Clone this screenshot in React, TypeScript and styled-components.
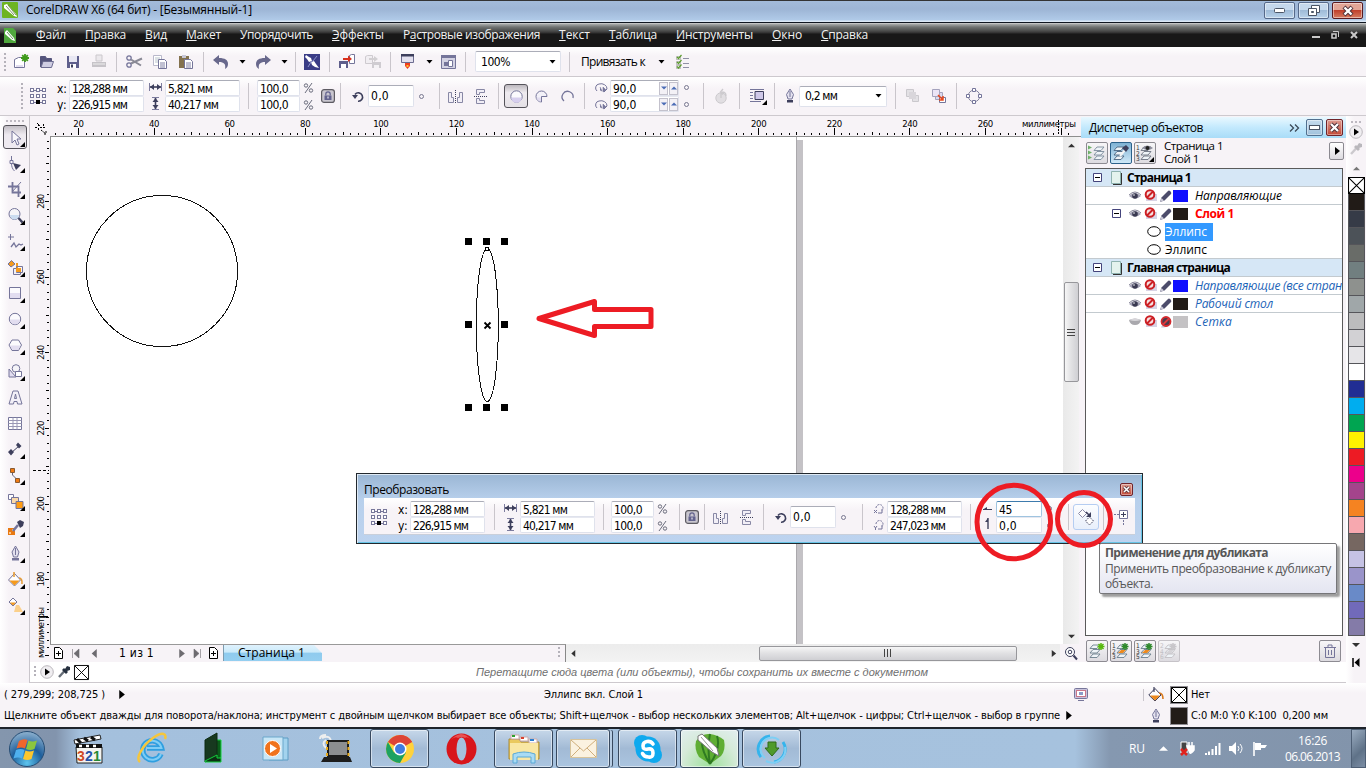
import React, { useLayoutEffect, useRef, useState } from "react";
import styled, { createGlobalStyle, css } from "styled-components";

const TAHOMA = `"DejaVu Sans Condensed", "DejaVu Sans", sans-serif`;
const SEGOE = `"Open Sans", "Noto Sans", sans-serif`;
const INK = "#75759a";
const DARK = "#3d3f5c";
const LITE = "#e2ddf0";
const ORANGE = "#f59a1c";

const Global = createGlobalStyle`
  * { box-sizing: border-box; }
  html, body { margin: 0; padding: 0; overflow: hidden; }
  body { font-family: ${TAHOMA}; font-size: 11px; color: #000; background: #f7f3f7; }
  svg { display: block; flex: none; overflow: visible; }
`;

/* ---------- text ---------- */

const Run = styled.span<{ $face?: string; $size?: number; $color?: string; $bold?: boolean; $italic?: boolean }>`
  display: inline-block;
  flex: none;
  white-space: pre;
  line-height: 14px;
  font-family: ${(p) => p.$face || TAHOMA};
  font-size: ${(p) => p.$size || 11}px;
  color: ${(p) => p.$color || "inherit"};
  font-weight: ${(p) => (p.$bold ? 700 : 400)};
  font-style: ${(p) => (p.$italic ? "italic" : "normal")};
`;

type LabelProps = {
  text: string;
  w: number;
  face?: string;
  size?: number;
  color?: string;
  bold?: boolean;
  italic?: boolean;
  mark?: number;
};

/* A label whose tracking is measured so that it fills the width it was designed for. */
function Label({ text, w, face, size, color, bold, italic, mark }: LabelProps) {
  const ref = useRef<HTMLSpanElement>(null);
  const [track, setTrack] = useState(0);
  useLayoutEffect(() => {
    if (ref.current) {
      const natural = ref.current.getBoundingClientRect().width - track * text.length;
      setTrack((w + 1 - natural) / text.length);
    }
  }, [text, w]);
  return (
    <Run ref={ref} style={{ letterSpacing: track }} $face={face} $size={size} $color={color} $bold={bold} $italic={italic}>
      {mark === undefined ? text : (
        <>{text.slice(0, mark)}<u>{text[mark]}</u>{text.slice(mark + 1)}</>
      )}
    </Run>
  );
}

/* ---------- generic parts ---------- */

const Cell = styled.div<{ $w?: number; $h?: number; $ml?: number }>`
  flex: none;
  width: ${(p) => p.$w ?? 26}px;
  height: ${(p) => p.$h ?? 26}px;
  margin-left: ${(p) => p.$ml ?? 0}px;
  display: flex;
  align-items: center;
  justify-content: center;
`;
const Gap = styled.div<{ $w: number }>`
  flex: none;
  width: ${(p) => p.$w}px;
`;
const Sep = styled.div<{ $w?: number; $h?: number }>`
  flex: none;
  width: ${(p) => p.$w ?? 9}px;
  height: ${(p) => p.$h ?? 20}px;
  background: linear-gradient(#c9c5cb, #c9c5cb) center / 1px 100% no-repeat;
`;
const Grip = styled.div<{ $h: number }>`
  flex: none;
  width: 2px;
  height: ${(p) => p.$h}px;
  background: repeating-linear-gradient(#b5b2ba 0 2px, transparent 2px 4px);
`;
const Caret = ({ c = "#000" }: { c?: string }) => (
  <svg width="7" height="4"><path d="M0.5 0h6L3.5 3.6z" fill={c} /></svg>
);
const Tri = ({ dir, c = "#000", s = 8 }: { dir: "l" | "r" | "u" | "d"; c?: string; s?: number }) => {
  const d = { l: "M6 0v8L1.5 4z", r: "M2 0v8l5-4z", u: "M0 6h8L4 2z", d: "M0 2h8L4 6z" }[dir];
  return <svg width={s} height={s} viewBox="0 0 8 8"><path d={d} fill={c} /></svg>;
};

/* ---------- window frame ---------- */

const Screen = styled.div`
  position: relative;
  width: 1366px;
  height: 768px;
  display: flex;
  flex-direction: column;
  overflow: hidden;
  background: #f7f3f7;
`;
const TitleBar = styled.div`
  flex: none;
  height: 23px;
  border-top: 1px solid #333;
  border-bottom: 1px solid #0f1620;
  background: linear-gradient(#a3bbda 0, #9db5d5 8px, #b0cae8 19px, #dbe8f5 20px);
  display: flex;
  align-items: flex-start;
  padding-left: 2px;
`;
const TitleText = styled.div`
  margin: 2px 0 0 8px;
  flex: 1;
`;
const WinButton = styled.div<{ $close?: boolean }>`
  width: 31px;
  height: 17px;
  margin: 1px 3px 0 0;
  border: 1px solid ${(p) => (p.$close ? "#5a1a20" : "#56698a")};
  border-radius: 2px;
  box-shadow: inset 0 0 0 1px rgba(255, 255, 255, 0.45);
  background: ${(p) =>
    p.$close ? "linear-gradient(#e2a596 45%, #c0402c 50%, #d67b60)" : "linear-gradient(#c5d8ec 45%, #9fbbd8 50%, #b9d2ea)"};
  display: flex;
  align-items: center;
  justify-content: center;
`;
const MenuBar = styled.div`
  flex: none;
  height: 24px;
  background: linear-gradient(#dcdcdc 0, #a9acab 1px, #707372 4px, #4a4b4a 8px, #303030 10px, #181818 11px);
  color: #f2f2f2;
  display: flex;
  align-items: center;
  padding-left: 2px;
`;
const MenuItems = styled.div`
  display: flex;
  flex: 1;
  gap: 19px;
  margin-left: 20px;
`;
const MdiButtons = styled.div`
  display: flex;
  gap: 11px;
  margin-right: 8px;
  align-items: center;
`;

/* ---------- toolbars ---------- */

const StandardBar = styled.div`
  flex: none;
  height: 30px;
  border-bottom: 1px solid #cdc9ce;
  background: linear-gradient(#fff 0, #f7f3f7 9px);
  display: flex;
  align-items: center;
  padding-left: 4px;
`;
const PropertyBar = styled.div`
  flex: none;
  height: 39px;
  border-bottom: 1px solid #cdc9ce;
  background: linear-gradient(#fff 0, #f7f3f7 12px);
  display: flex;
  align-items: center;
  padding-left: 21px;
`;
const Field = styled.div<{ $w: number; $h?: number; $active?: boolean }>`
  flex: none;
  width: ${(p) => p.$w}px;
  height: ${(p) => p.$h ?? 16}px;
  border: 1px solid #dfe2ec;
  border-top-color: #abadb8;
  border-radius: 2px;
  ${(p) => p.$active && css`border-color: #9fc4e0; border-top-color: #3d7bad;`}
  background: #fff;
  padding-left: 2px;
  display: flex;
  align-items: center;
`;
const Pair = styled.div<{ $w?: number; $gap?: number; $drop?: number }>`
  flex: none;
  width: ${(p) => (p.$w ? p.$w + "px" : "auto")};
  padding-top: ${(p) => p.$drop ?? 0}px;
  display: flex;
  flex-direction: column;
  align-items: center;
  gap: ${(p) => p.$gap ?? 0}px;
`;
const FieldStack = styled(Pair)`
  & > ${Field} { padding-top: 2px; }
  & > ${Field} + ${Field} { border-top-color: #e6e8f0; }
`;
const Combo = styled.div<{ $w: number }>`
  flex: none;
  width: ${(p) => p.$w}px;
  height: 21px;
  border: 1px solid #dfe2ec;
  border-top-color: #abadb8;
  border-radius: 2px;
  background: #fff;
  display: flex;
  align-items: center;
  justify-content: space-between;
  padding: 0 4px 0 5px;
`;
const Pressed = styled.div`
  flex: none;
  width: 24px;
  height: 24px;
  border: 1px solid #55535a;
  border-radius: 3px;
  background: linear-gradient(#bcb8be, #efebf0 35%, #e5e1e6);
  display: flex;
  align-items: center;
  justify-content: center;
`;
const Spins = styled.div`
  display: flex;
  gap: 1px;
  margin-left: auto;
`;
const Spin = styled.div`
  width: 9px;
  height: 13px;
  margin-top: -2px;
  border: 1px solid #c3c1cc;
  background: #f3f1f6;
  display: flex;
  align-items: center;
  justify-content: center;
`;

/* ---------- icons ---------- */

const I = {
  app: (
    <svg width="16" height="16"><rect width="16" height="16" rx="1" fill="#6db422" /><path d="M2 3l3-1 9 10 1 3-3-1L2 6z" fill="#fff" /><path d="M4 4l8 9M6 3l8 10" stroke="#5d7d3c" strokeWidth=".8" /></svg>
  ),
  doc: (
    <svg width="12" height="15"><path d="M0 0h9l3 3v12H0z" fill="#4fa83d" /><path d="M1 4l2-2 7 8 1 3-3-1-7-6z" fill="#fff" /><path d="M3 4l6 7" stroke="#3c7c35" strokeWidth=".8" /></svg>
  ),
  neu: (
    <svg width="15" height="15"><path d="M.5 5.500l4-2h6v10H.5z" fill="#fff" stroke={INK} /><path d="M2 12h7" stroke={LITE} strokeWidth="2" /><path d="M11 0v8M7 4h8M8.2 1.2l5.6 5.6M13.800 1.200l-5.600 5.600" stroke="#3f9a1a" strokeWidth="1.800" /></svg>
  ),
  open: (
    <svg width="14" height="13"><path d="M.5 12V1.500h5l1 2h5V6" fill="#55557c" stroke="#55557c" /><path d="M1 12.500L3 6.500H13.500L11.500 12.500z" fill="#cfcde2" stroke="#6c6c90" /></svg>
  ),
  save: (
    <svg width="12" height="12"><path d="M0 0h12v12H0z" fill="#5f5f8c" /><path d="M2 0h8v6H2z" fill="#e9e8f3" /><path d="M3 8h6v4H3z" fill="#fff" /><path d="M4 8.500h2v3H4z" fill={DARK} /></svg>
  ),
  print: (
    <svg width="14" height="13"><path d="M4 0h6v6H4z" fill="#ebe8ec" stroke="#cbc8cc" /><path d="M0 7h14v5H0z" fill="#c6c3c8" /><path d="M1 9h12" stroke="#eee" /></svg>
  ),
  cut: (
    <svg width="17" height="13"><circle cx="3" cy="3" r="2.200" fill="none" stroke={INK} strokeWidth="1.300" /><circle cx="3" cy="10" r="2.200" fill="none" stroke={INK} strokeWidth="1.300" /><path d="M5 4.500L15 10.500M5 8.500L16 3.500" stroke="#8a8a96" strokeWidth="2" /></svg>
  ),
  copy: (
    <svg width="14" height="14"><path d="M.5 .5h8v10h-8z" fill="#fff" stroke="#b9b9cb" /><path d="M2 3h5M2 5h3M2 7h3" stroke="#b9c4cb" /><path d="M5.500 4.500h6l2 2v7h-8z" fill="#fff" stroke={INK} /><path d="M7 8h5M7 10h5M7 12h5" stroke={INK} strokeWidth=".9" /></svg>
  ),
  paste: (
    <svg width="14" height="14"><path d="M0 1h10v12H0z" fill="#84724e" /><path d="M3 0h4v3H3z" fill="#c8c8d8" /><path d="M5.500 4.500h6l2 2v7h-8z" fill="#fff" stroke={INK} /><path d="M7 8h5M7 10h5M7 12h5" stroke={INK} strokeWidth=".9" /></svg>
  ),
  undo: (
    <svg width="16" height="14"><path d="M0 5L6 0v3c6 0 9 2 9 6 0 2-1 4-3 5 1-5-1-7-6-7v3z" fill="#68688c" /></svg>
  ),
  redo: (
    <svg width="16" height="14"><path d="M16 5L10 0v3C4 3 1 5 1 9c0 2 1 4 3 5-1-5 1-7 6-7v3z" fill="#68688c" /></svg>
  ),
  connect: (
    <svg width="16" height="16"><rect width="16" height="16" fill="#3a3c86" /><path d="M2 1l3 2 2 1 1 3-3 1-2-3-2-2zM7 8l3-1 2 3 3 4-4-1-3-2z" fill="#fff" /><path d="M4 13l3-5 2-1 4-5" stroke="#8d92cc" strokeWidth="1" fill="none" /></svg>
  ),
  imp: (
    <svg width="16" height="15"><path d="M0 7h9v7H0z" fill="#5f5f8c" /><path d="M2 10h5v4H2z" fill="#fff" /><path d="M10.500 1.500l2-1h3v9h-5z" fill="#fff" stroke={INK} /><path d="M4 6V4h5V1.500L13 5 9 8V6z" fill="#d8301c" /></svg>
  ),
  exp: (
    <svg width="16" height="15" opacity=".8"><path d="M.5 2.500l2-1h5v8h-7z" fill="#f0eef1" stroke="#c4c1c6" /><path d="M7 8h9v6H7z" fill="#c6c3c8" /><path d="M9 11h5v3H9z" fill="#f4f2f5" /><path d="M4 6V4h5V2l4 3-4 3V6z" fill="#c9c7ca" /></svg>
  ),
  launch: (
    <svg width="13" height="15"><path d="M.5 .500h12v8H.5z" fill="#e3e1ef" stroke="#6c6c90" /><path d="M0 0h13v2.500H0z" fill={DARK} /><path d="M4 9h5v3L6.500 15 4 12z" fill="#f03e1e" /><path d="M5.500 11h2v2h-2z" fill="#fbc02d" /></svg>
  ),
  welcome: (
    <svg width="15" height="14"><path d="M.5 .500h14v13H.5z" fill="#d3d2e3" stroke={INK} /><path d="M0 0h15v3H0z" fill={INK} /><path d="M3 7h4v4H3z" fill={INK} /><path d="M7.500 5.500h4v6h-4z" fill="#fff" stroke={INK} /></svg>
  ),
  checks: (
    <svg width="13" height="14"><path d="M.5 1.500h4v3h-4zM.5 6.500h4v3h-4zM.5 10.500h4v3h-4z" fill="none" stroke="#a5a5a5" strokeWidth=".7" /><path d="M1 2l1.500 1.500L5.500 0M1 7l1.500 1.500L5.500 5M1 11.500L2.500 13l3-3.500" stroke="#5c9c2e" strokeWidth="1.200" fill="none" /><path d="M7 3.500h6M7 8.500h6M7 12.500h6" stroke="#9090a5" /></svg>
  ),
  refpt: (
    <svg width="17" height="17">
      {[0, 6, 12].map((y) => [0, 6, 12].map((x) => <rect key={x + "-" + y} x={x + 0.500} y={y + 0.500} width="3" height="3" fill={x === 6 && y === 12 ? "#000" : "#fff"} stroke={x === 6 && y === 12 ? "#000" : "#77779a"} />))}
      <path d="M4 2.500h2M10 2.500h2M4 14.500h2M10 14.500h2" stroke="#77779a" />
    </svg>
  ),
  width: (
    <svg width="13" height="9"><path d="M.5 0v8M12.500 0v8" stroke="#7c7c9e" /><path d="M1 4h11" stroke={DARK} strokeWidth="1.600" /><path d="M5 1v6L1 4zM8 1v6l4-3z" fill={DARK} /></svg>
  ),
  height: (
    <svg width="9" height="13"><path d="M1 .500h7M1 12.500h7" stroke="#7c7c9e" /><path d="M4.500 1v11" stroke={DARK} strokeWidth="1.600" /><path d="M1.500 5h6l-3-4zM1.500 8h6l-3 4z" fill={DARK} /></svg>
  ),
  pct: (
    <svg width="9" height="10"><path d="M8 0L1 10" stroke="#6a6c7c" /><circle cx="2" cy="2.500" r="1.700" fill="none" stroke="#6a6c7c" /><circle cx="7" cy="7.500" r="1.700" fill="none" stroke="#6a6c7c" /></svg>
  ),
  lock: (
    <svg width="14" height="14"><rect x=".6" y=".6" width="12.800" height="12.800" rx="2.500" fill="#c9c6cf" stroke="#5d5b62" strokeWidth="1.200" /><path d="M3.500 6.500h7v4.500h-7z" fill="#63638e" /><path d="M4.800 6.500V5a2.200 2.200 0 014.400 0v1.500" fill="none" stroke="#63638e" strokeWidth="1.200" /><path d="M7 7.500v2" stroke="#fff" /></svg>
  ),
  rot: (
    <svg width="12" height="11"><path d="M3 3.500A4.200 4.200 0 116 10.200" fill="none" stroke={DARK} strokeWidth="1.600" /><path d="M0 4h6L3 8z" fill={DARK} /></svg>
  ),
  deg: <svg width="5" height="5"><circle cx="2.500" cy="2.500" r="2" fill="none" stroke="#77778f" /></svg>,
  mirH: (
    <svg width="15" height="13"><path d="M.5 2.500h3v5h2v5h-5zM14.500 2.500h-3v5h-2v5h5z" fill="#f1eef6" stroke="#8888a5" /><path d="M7.500 0v13" stroke={DARK} strokeDasharray="1 1" /></svg>
  ),
  mirV: (
    <svg width="14" height="15"><path d="M2.500 .500h8v3h-5v2h-3zM2.500 14.500h8v-3h-5v-2h-3z" fill="#f1eef6" stroke="#8888a5" /><path d="M0 7.500h14" stroke={DARK} strokeDasharray="1 1" /></svg>
  ),
  ell: (
    <svg width="13" height="13"><circle cx="6.500" cy="6.500" r="5.700" fill="#fbfafd" stroke={INK} /><path d="M1.200 7.500h10.600a5.300 5.300 0 01-10.600 0z" fill="#d7cfee" /></svg>
  ),
  pie: (
    <svg width="13" height="13"><path d="M6.500 6.500h5.500A5.500 5.500 0 106.500 12z" fill="#f3f1f8" stroke={INK} /><path d="M1.500 7.500H6v4a5 5 0 01-4.500-4z" fill={LITE} /></svg>
  ),
  arc: <svg width="13" height="13"><path d="M3 11A5.500 5.500 0 1112 8" fill="none" stroke={INK} strokeWidth="1.300" /></svg>,
  ang: (
    <svg width="13" height="10"><path d="M2 8A4 4 0 014 1a6 5 0 018 5l-3 3" fill="none" stroke={INK} /><path d="M5 4l2 4-2-1M8 4v5l3-2z" fill={INK} stroke={INK} strokeWidth=".6" /></svg>
  ),
  dirn: (
    <svg width="13" height="15" opacity=".8"><circle cx="6" cy="9" r="5.200" fill="#dcdadd" stroke="#c2c0c4" /><path d="M6 9V2.500M7 3q4 0 4 4M8 0L5.500 3 8 5.500" fill="none" stroke="#c2c0c4" strokeWidth="1.300" /></svg>
  ),
  wrap: (
    <svg width="17" height="17"><path d="M0 1.500h14M0 4.500h3M0 7.500h3M0 10.500h3M0 13.500h11" stroke={INK} /><path d="M5 3.500h8.500v8H5z" fill="#cfc8e8" stroke={DARK} /><path d="M17 12v5h-5z" fill="#000" /></svg>
  ),
  pen: (
    <svg width="10" height="14"><path d="M5 0L1.500 5.500 3 10h4l1.500-4.500z" fill="#e3e1ee" stroke={INK} /><path d="M5 2v6" stroke={INK} /><path d="M2 11h6v2.500H2z" fill={DARK} /></svg>
  ),
  front: (
    <svg width="14" height="14" opacity=".75"><path d="M.5 .500h7v7h-7zM6.500 6.500h6v6h-6z" fill="#dddbdf" stroke="#bcbabf" /><path d="M3 3h7v7H3z" fill="#cfcdd2" /></svg>
  ),
  back: (
    <svg width="14" height="14"><path d="M3.500 3.500h7v7h-7z" fill="#dcd8ec" stroke="#a4a2bd" /><path d="M.5 .500h7v7h-7z" fill="#ebe4f6" stroke="#a4a2bd" /><path d="M7.500 8.500h6v5h-6z" fill="#fff" stroke={INK} /><path d="M6 6l5 5m0-4v4H7" stroke="#e8481c" strokeWidth="1.500" fill="none" /></svg>
  ),
  curve: (
    <svg width="16" height="16"><circle cx="8" cy="8" r="5.800" fill="none" stroke="#85859f" /><path d="M6.500 .500h3v3h-3zM6.500 12.500h3v3h-3zM.5 6.500h3v3h-3zM12.500 6.500h3v3h-3z" fill="#fff" stroke={INK} /></svg>
  ),
};

const toolIcons: { d: React.ReactNode; fly?: boolean }[] = [
  { fly: true, d: <path d="M4 1v12l3-3 2 5 2-1-2-5h4z" fill="#f8f7fb" stroke={INK} /> },
  { fly: true, d: <><path d="M3.500 0v4M3.500 7c0 4 1 6 3 8M2 4.500h3v3H2z" fill="none" stroke={INK} /><path d="M5 7l8 2-5 5z" fill={DARK} /></> },
  { fly: true, d: <><path d="M4.500 0v10.500H13M0 4.500h10.500V15" fill="none" stroke={INK} strokeWidth="1.800" /><path d="M13 0L4 10" stroke={INK} /></> },
  { fly: true, d: <><circle cx="6.500" cy="6" r="5.500" fill="#f5f4f8" stroke={INK} /><path d="M2 7h9a4.500 4.500 0 01-9 0z" fill="#cbdcf0" /><path d="M10.500 10l4 4.500" stroke={DARK} strokeWidth="2.400" /></> },
  { fly: true, d: <><path d="M2.500 0v6M0 3h6" stroke={INK} /><path d="M3 13l3-4 2 4 3-3 2 1 2-1" fill="none" stroke={INK} strokeWidth="1.300" /></> },
  { fly: true, d: <><path d="M3.500 .500L0 4l3 3 4-3z" fill={ORANGE} stroke={INK} /><path d="M9 3v5" stroke={ORANGE} strokeWidth="2" /><path d="M5.500 8.500h7v6h-7z" fill="#f0eef5" stroke={INK} /><path d="M8.500 6.500h6v6h-6z" fill="none" stroke={INK} /><path d="M8 8h5v4H8z" fill={ORANGE} /></> },
  { fly: true, d: <><path d="M1.500 1.500h11v11h-11z" fill="#fbfafd" stroke={INK} /><path d="M2 7h10v5H2z" fill={LITE} /></> },
  { fly: true, d: <><circle cx="7" cy="7" r="5.700" fill="#fbfafd" stroke={INK} /><path d="M2 7.500h10a5 5 0 01-10 0z" fill={LITE} /></> },
  { fly: true, d: <><path d="M4 2h6.500l3 5-3 5.500H4L1 7z" fill="#fbfafd" stroke={INK} /><path d="M2 7.500h10.500L10 12H4.500z" fill={LITE} /></> },
  { fly: true, d: <><path d="M1 5v8h7z" fill={LITE} stroke={INK} /><circle cx="8" cy="4.500" r="3.800" fill="#f5f4f8" stroke={INK} /><path d="M7.500 7.500h6v5h-6z" fill="#fff" stroke={INK} /></> },
  { d: <path d="M5 1h5l4 13H9.500L9 11.500H6L5.500 14H1zM6.500 8.500h2L7.500 4z" fill="#f3f0f8" stroke={INK} fillRule="evenodd" /> },
  { d: <><path d="M.5 1.500h13v12H.5z" fill="#fff" stroke={INK} /><path d="M.5 4.500h13M.5 7.500h13M.5 10.500h13M5 1.500v12M9 1.500v12" stroke="#9a98b5" /></> },
  { fly: true, d: <><path d="M3 11l8-7" stroke={DARK} /><path d="M10 .500l3.500 3.500-2.500 2.500L8 3zM3 7l3 3-3 3.500L0 10z" fill={DARK} /></> },
  { fly: true, d: <><path d="M4.500 3v4l5 5" fill="none" stroke={DARK} strokeWidth=".8" /><path d="M2.500 .500h4v4h-4zM7.500 10.500h4v4h-4z" fill="#f07a12" stroke="#8a5a30" /></> },
  { fly: true, d: <><path d="M.5 .500h5v5h-5z" fill="#fff" stroke={INK} /><path d="M3.500 3.500h7v6h-7z" fill="#fbd9a8" stroke={INK} /><path d="M8 7.500h7v7H8z" fill="#ff9c12" stroke={INK} /></> },
  { fly: true, d: <><path d="M0 8h7v7H0z" fill="#e87912" /><path d="M1 12h2v2H1zM4 9h2v2H4z" fill="#fbc98d" /><path d="M5 11l5-6" stroke={INK} strokeWidth="2.600" /><path d="M9 2l3-2 4 2-1 4-3 2z" fill={DARK} /></> },
  { fly: true, d: <><path d="M7.500 0L4 6l1.500 5h4L11 6z" fill="#e3e1ee" stroke={INK} /><path d="M7.500 2v7" stroke={INK} /><path d="M4 12h7v2.500H4z" fill={INK} /></> },
  { fly: true, d: <><path d="M6.500 1.500L.5 8l6 6 6-6z" fill="#fff" stroke={INK} /><path d="M1.500 8.500h10l-5 5z" fill={ORANGE} /><path d="M6 5V0M11 6q3.500 0 3 6" stroke="#e89a2e" strokeWidth="1.500" fill="none" /></> },
  { fly: true, d: <><path d="M5 0L1 4l4 4 4-4z" fill="#fff" stroke={INK} /><path d="M2 4.500h6L5 7.500z" fill={ORANGE} /><path d="M8 7h3l4 7H6z" fill="#fbd08b" /></> },
];

/* ---------- main area ---------- */

const Main = styled.div`
  flex: none;
  height: 567px;
  display: flex;
`;
const Toolbox = styled.div`
  flex: none;
  width: 30px;
  border-right: 1px solid #c9c5cb;
  background: linear-gradient(90deg, #fff, #f7f3f7 9px);
  padding: 4px 0 0 2px;
  display: flex;
  flex-direction: column;
`;
const ToolGrip = styled.div`
  flex: none;
  width: 18px;
  height: 2px;
  margin: 0 0 2px 4px;
  background: repeating-linear-gradient(90deg, #bdb9c1 0 2px, transparent 2px 4px);
`;
const PaletteGrip = styled(ToolGrip)`
  width: 10px;
  margin: 0 0 2px;
`;
const Tool = styled.div<{ $on?: boolean }>`
  flex: none;
  position: relative;
  width: 24px;
  height: 24px;
  margin: 1px;
  border-radius: 3px;
  display: flex;
  align-items: center;
  justify-content: center;
  border: 1px solid transparent;
  ${(p) => p.$on && css`border-color: #55535a; background: linear-gradient(#c2bec5, #eeeaf0 40%);`}
`;
const Fly = styled.svg`
  position: absolute;
  right: 1px;
  bottom: 1px;
`;
const Middle = styled.div`
  flex: none;
  width: 1316px;
  display: flex;
  flex-direction: column;
`;
const MiddleTop = styled.div`
  display: flex;
  height: 546px;
`;
const DocArea = styled.div`
  flex: none;
  width: 1051px;
  display: flex;
  flex-direction: column;
`;
const DocRow = styled.div`
  flex: 1;
  min-height: 0;
  display: flex;
`;
const Sheet = styled.div`
  flex: none;
  width: 1012px;
  background: #fff;
`;
const VScroll = styled.div`
  flex: none;
  width: 16px;
  background: linear-gradient(90deg, #e9e9e9, #f3f3f3);
  display: flex;
  flex-direction: column;
  align-items: center;
  padding: 5px 0 4px;
  justify-content: space-between;
`;
const ThumbV = styled.div`
  width: 15px;
  height: 100px;
  margin-top: -118px;
  border: 1px solid #97979b;
  border-radius: 2px;
  background: linear-gradient(90deg, #f6f6f6, #e2e2e4 45%, #cfcfd3);
  display: flex;
  align-items: center;
  justify-content: center;
`;
const PageBar = styled.div`
  flex: none;
  height: 18px;
  display: flex;
`;
const PageNav = styled.div`
  width: 516px;
  margin-left: 20px;
  padding-bottom: 1px;
  border-top: 1px solid #999;
  border-right: 1px solid #888;
  display: flex;
  align-items: center;
`;
const PageTab = styled.div`
  width: 99px;
  height: 16px;
  margin-left: 5px;
  padding-left: 14px;
  display: flex;
  align-items: center;
  border-left: 1px solid #7d9cb0;
  background: linear-gradient(#dff2fd 0, #cbeafa 45%, #8fcbee 50%, #94cff0);
  clip-path: polygon(0 0, 91px 0, 100% 8px, 100% 100%, 0 100%);
`;
const HScroll = styled.div`
  flex: 1;
  background: linear-gradient(#ececec, #f3f3f3);
  display: flex;
  align-items: center;
  justify-content: space-between;
  padding: 0 3px 0 4px;
`;
const ThumbH = styled.div`
  width: 258px;
  height: 15px;
  margin-left: 148px;
  border: 1px solid #97979b;
  border-radius: 2px;
  background: linear-gradient(#f6f6f6, #e2e2e4 45%, #cfcfd3);
  display: flex;
  align-items: center;
  justify-content: center;
`;
const DocPalette = styled.div`
  height: 21px;
  background: #fff;
  border-bottom: 1px solid #cdc9ce;
  display: flex;
  align-items: center;
  padding-left: 4px;
`;

const tickX = (mm: number) => 48.1 + (mm - 20) * 3.779;
const tickY = (mm: number) => 64.2 + (280 - mm) * 3.779;

function TopRuler() {
  const ticks: React.ReactNode[] = [];
  for (let mm = 14; mm <= 282; mm += 2) {
    const h = mm % 20 === 0 ? 7 : mm % 10 === 0 ? 3 : 2;
    ticks.push(<rect key={mm} x={Math.round(tickX(mm))} y={19 - h} width="1" height={h} fill="#000" />);
  }
  return (
    <svg width="1051" height="21" fontFamily={TAHOMA} fontSize="9.500">
      {ticks}
      <path d="M20 20.500h1031" stroke="#8e8e8e" />
      {Array.from({ length: 13 }, (_, i) => 20 * (i + 1)).map((n) => (
        <text key={n} x={tickX(n) + 0.500} y="11" textAnchor="middle" textLength={n < 100 ? 10.500 : 15.500}>{n}</text>
      ))}
      <text x="992" y="11" textLength="54">миллиметры</text>
      <path d="M1028.500 4v14" stroke="#000" strokeDasharray="2 1" />
      <path d="M8.500 8v2m0 2v2M5 11.500h2m3 0h5M11 14l5 4m0-3v3h-3M7 7l3 3M13.500 8v2" stroke="#000" fill="none" strokeDasharray="2 1" />
    </svg>
  );
}

function LeftRuler() {
  const ticks: React.ReactNode[] = [];
  for (let mm = 296; mm >= 160; mm -= 2) {
    const w = mm % 20 === 0 ? 4 : mm % 10 === 0 ? 3 : 2;
    ticks.push(<rect key={mm} x={19 - w} y={Math.round(tickY(mm))} width={w} height="1" fill="#000" />);
  }
  return (
    <svg width="21" height="507" fontFamily={TAHOMA} fontSize="9.500">
      {ticks}
      <path d="M20.500 0v507" stroke="#8e8e8e" />
      {[280, 260, 240, 220, 200, 180].map((n) => (
        <text key={n} transform={`translate(14 ${tickY(n) + 7.500}) rotate(-90)`} textLength="15">{n}</text>
      ))}
      <text transform="translate(14 521) rotate(-90)" textLength="51">миллиметры</text>
      <path d="M3 333.500h16" stroke="#000" strokeDasharray="3 2" />
      <path d="M8 479.500h10" stroke="#000" />
    </svg>
  );
}

function Drawing() {
  return (
    <svg width="1011" height="507" viewBox="51 137 1011 507">
      <path d="M796.500 137v507" stroke="#aaa8ac" />
      <path d="M797 140h6v504h-6z" fill="#c4c2c6" />
      <g fill="none" stroke="#111" strokeWidth="1" shapeRendering="crispEdges">
        <circle cx="162" cy="271" r="75.500" />
        <ellipse cx="487.300" cy="325" rx="11" ry="76.500" />
      </g>
      {[241, 324, 407].map((y) => [468, 486, 504].map((x) => (y === 324 && x === 486 ? null : <rect key={x + "-" + y} x={x - 3} y={y - 3} width="7" height="7" />)))}
      <path d="M484.500 322.500l6 6m0-6l-6 6" stroke="#000" strokeWidth="1.800" />
      <rect x="485.500" y="247.500" width="3" height="3" fill="#fff" stroke="#000" />
      <path d="M539 318.500L594.500 301.500v8H651v17h-56.500v9z" fill="none" stroke="#ed1c24" strokeWidth="5" strokeLinejoin="round" />
    </svg>
  );
}

const PageAdd = () => (
  <svg width="9" height="12"><path d="M.5 .500h5l3 3v8h-8z" fill="#fff" stroke="#000" /><path d="M2 6.500h5M4.500 4v5" stroke="#000" /></svg>
);
const Play = () => (
  <svg width="14" height="14"><circle cx="7" cy="7" r="6.300" fill="#f0eef1" stroke="#bbb8bd" /><path d="M5 3.500v7L10 7z" fill="#000" /></svg>
);
const Dropper = ({ c = DARK }: { c?: string }) => (
  <svg width="12" height="12"><path d="M1 11l5.500-6" stroke={c} strokeWidth="2.400" opacity=".7" /><path d="M6 2l1 1 2-3 3 1v3L9 5l1 1-2 2-4-4z" fill={c} /></svg>
);
const NoColor = ({ s }: { s: number }) => (
  <svg width={s} height={s} viewBox="0 0 16 16"><path d="M.5 .500h15v15H.5zM1 1l14 14M15 1L1 15" fill="#fff" stroke="#000" /></svg>
);

/* ---------- object manager ---------- */

const Docker = styled.div`
  flex: none;
  width: 265px;
  padding-top: 1px;
  display: flex;
  flex-direction: column;
`;
const DockerHead = styled.div`
  flex: none;
  height: 21px;
  background: linear-gradient(#e9f8ff, #c3e9fd 50%, #a9dcf8);
  display: flex;
  align-items: center;
  padding-left: 8px;
`;
const SmallWin = styled.div<{ $close?: boolean }>`
  width: 17px;
  height: 17px;
  margin-left: 3px;
  border: 1px solid ${(p) => (p.$close ? "#71242a" : "#51708f")};
  border-radius: 2px;
  box-shadow: inset 0 0 0 1px rgba(255, 255, 255, 0.4);
  background: ${(p) => (p.$close ? "linear-gradient(#dd9a8f, #c24a38)" : "linear-gradient(#c6dcee, #a1c2dc)")};
  display: flex;
  align-items: center;
  justify-content: center;
`;
const DockerTools = styled.div`
  flex: none;
  height: 30px;
  display: flex;
  align-items: flex-start;
  gap: 2px;
  padding: 4px 2px 0 5px;
`;
const ToolButton = styled.div<{ $on?: boolean; $off?: boolean }>`
  flex: none;
  width: 22px;
  height: 22px;
  border: 1px solid ${(p) => (p.$on ? "#2c628b" : p.$off ? "#c6c3c8" : "#8d8b92")};
  border-radius: 2px;
  background: ${(p) => (p.$on ? "linear-gradient(#7fb2d4, #cfe9f8)" : "linear-gradient(#f7f6f8, #dddbe0)")};
  display: flex;
  align-items: center;
  justify-content: center;
`;
const PageInfo = styled.div`
  margin: -3px 0 0 6px;
  flex: 1;
  display: flex;
  flex-direction: column;
  align-items: flex-start;
  ${Run} { line-height: 13px; }
`;
const Flyout = styled.div`
  width: 15px;
  height: 18px;
  border: 1px solid #8b8990;
  border-radius: 2px;
  background: linear-gradient(#fff, #dddbe0);
  display: flex;
  align-items: center;
  justify-content: center;
`;
const Tree = styled.div`
  flex: none;
  width: 258px;
  height: 468px;
  margin-left: 4px;
  border: 1px solid #5a5a5a;
  background: #fff;
  overflow: hidden;
`;
const Row = styled.div<{ $head?: boolean; $plain?: boolean }>`
  height: 18px;
  border-bottom: 1px solid ${(p) => (p.$plain ? "transparent" : "#c3cacf")};
  background: ${(p) => (p.$head ? "#d6e7f6" : "#fff")};
  display: flex;
  align-items: center;
`;
const Swatch = styled.div<{ $c: string }>`
  flex: none;
  width: 15px;
  height: 12px;
  margin: 0 7px 0 1px;
  background: ${(p) => p.$c};
`;
const Selected = styled.div`
  height: 18px;
  padding-right: 6px;
  background: #3399ff;
  color: #fff;
  display: flex;
  align-items: center;
`;
const DockerFoot = styled.div`
  display: flex;
  gap: 2px;
  padding: 4px 3px 0 5px;
`;

const Expander = () => <svg width="9" height="9"><path d="M.5 .500h8v8h-8z" fill="#fff" stroke="#44447c" /><path d="M2 4.500h5" stroke="#000" /></svg>;
const PageIcon = () => <svg width="12" height="14"><path d="M1.500 .500h9v12h-9z" fill="#e4f3ee" stroke="#8fb3b0" /><path d="M11.500 2v11.500H3" stroke="#333" fill="none" /></svg>;
const Eye = ({ off }: { off?: boolean }) =>
  off ? (
    <svg width="12" height="8"><path d="M0 2q6-3 12 0-1 5-6 5T0 2z" fill="#a9a8ad" /><path d="M0 2q6-3 12 0-6 2-12 0z" fill="#d6d5d9" /></svg>
  ) : (
    <svg width="12" height="10"><path d="M0 5q6-6 12 0-6 5-12 0z" fill="#a3a2b5" /><path d="M0 4q6-6 12 0" stroke="#88879b" fill="none" /><circle cx="6" cy="5" r="2.800" fill="#3a3a52" /><circle cx="5" cy="4" r=".8" fill="#fff" /></svg>
  );
const NoPrint = () => (
  <svg width="13" height="13"><path d="M2 5h11v7H2z" fill="#d7d3e4" /><circle cx="6" cy="5.500" r="4.300" fill="#f7e1e1" stroke="#cc1f24" strokeWidth="2" /><path d="M9 2.500L3 8.500" stroke="#cc1f24" strokeWidth="2" /></svg>
);
const Pencil = () => <svg width="12" height="12"><path d="M0 12l1.500-4.500L8 1q1-1 2.500.5T11 4L4.500 10.500z" fill="#4c4c6b" /><path d="M0 12l1.500-4L4 10.500z" fill="#c9c8d6" /></svg>;
const NoEdit = () => <svg width="12" height="12"><path d="M1 11.500l2-4 5 3-4 1z" fill="#c9c8d6" /><circle cx="6" cy="5.500" r="4.500" fill="#4a3a4a" stroke="#d42a2e" strokeWidth="1.800" /><path d="M3 8.500l6-6" stroke="#e0383a" strokeWidth="1.800" /></svg>;
const Oval = () => <svg width="14" height="11"><ellipse cx="7" cy="5.500" rx="6.300" ry="4.800" fill="#fff" stroke="#000" /></svg>;

const Sheets = ({ x, c }: { x: number; c: string }) => (
  <g stroke={c} fill="#eff4f8" strokeWidth=".9">
    <path d={`M${x} 15.500l3-3.500h7l-3 3.500z`} /><path d={`M${x} 11l3-3.500h7L${x + 7} 11z`} /><path d={`M${x} 6.500l3-3.500h7l-3 3.500z`} />
  </g>
);
const Star = ({ x, y, c }: { x: number; y: number; c: string }) => (
  <path transform={`translate(${x} ${y})`} d="M0-3.500V3.500M-3.500 0H3.500M-2.500-2.500L2.500 2.500M2.500-2.500L-2.500 2.500" stroke={c} strokeWidth="1.500" />
);
const Digits = ({ t, c }: { t: string; c: string }) => (
  <g fontFamily={TAHOMA} fontSize="6.500" fill={c}>
    {t.split("").map((d, i) => <text key={d} x="0" y={6 + i * 5.500}>{d}</text>)}
  </g>
);
const LayerSwitches = () => (
  <svg width="18" height="18"><Sheets x={6} c="#7b8a9b" /><path d="M0 1.500l4 2-4 2zM0 6.500l4 2-4 2zM0 11.500l4 2-4 2z" fill="#6fb06a" /></svg>
);
const LayerEdit = () => (
  <svg width="18" height="18"><Sheets x={2} c="#4a6480" /><path d="M8 12l5-6" stroke="#f5f5f5" strokeWidth="2" /><path d="M10 4l4-3 3 3-3 4z" fill={DARK} /></svg>
);
const LayerView = () => (
  <svg width="18" height="18"><Digits t="123" c="#333" /><Sheets x={5} c="#6b7280" /><path d="M6 4q5-5 11 0-5 4-11 0z" fill="#8c8c9b" /><circle cx="11.500" cy="4" r="2" fill="#222" /><path d="M18 13v5h-5z" /></svg>
);
const LayerNew = ({ t, off }: { t?: string; off?: boolean }) => (
  <svg width="18" height="18">
    {t ? <Digits t={t} c={off ? "#c2c0c4" : "#333"} /> : null}
    <Sheets x={t ? 5 : 2} c={off ? "#c2c0c4" : "#6b7f8c"} />
    {t ? <path d="M6 11l3-3h5l-3 3z" fill={off ? "#d5d3d7" : "#ee8a1d"} /> : null}
    <Star x={13} y={4.500} c={off ? "#c8c6ca" : t ? "#2f8a2c" : "#57b80e"} />
  </svg>
);

function Layer({ name, w, color, swatch, bold, italic = true, off, expander }: { name: string; w: number; color?: string; swatch: string; bold?: boolean; italic?: boolean; off?: boolean; expander?: boolean }) {
  return (
    <Row $plain={expander || off}>
      <Gap $w={26} />
      <Cell $w={9} $h={16}>{expander ? <Expander /> : null}</Cell>
      <Gap $w={8} />
      <Eye off={off} /><Gap $w={3} /><NoPrint /><Gap $w={3} />{off ? <NoEdit /> : <Pencil />}
      <Swatch $c={swatch} />
      <Label text={name} w={w} face={SEGOE} size={12} color={color} bold={bold} italic={italic} />
    </Row>
  );
}

/* ---------- colour palette ---------- */

const Palette = styled.div`
  flex: none;
  width: 20px;
  padding: 5px 0 0;
  background: linear-gradient(90deg, #fff, #f7f3f7 8px);
  display: flex;
  flex-direction: column;
  align-items: center;
`;
const Chip = styled.div<{ $c: string }>`
  flex: none;
  width: 17px;
  height: 17px;
  border: 1px solid #55555a;
  border-top: 0;
  background: ${(p) => p.$c};
`;
const chips = ["#211b17", "#363b47", "#4c5258", "#696c68", "#717f80", "#8e918e", "#a0a7a9", "#bcbcbd", "#d2d1d4", "#e6e5e8", "#ffffff", "#212d93", "#00adef", "#00a551", "#fff100", "#ed1b24", "#ec008b", "#a4448c", "#f58321", "#f7a8af", "#766761", "#c5c2e4", "#9a94ca", "#698ac8", "#716aba", "#847ba8"];

/* ---------- status bar ---------- */

const StatusBar = styled.div`
  flex: none;
  height: 46px;
  border-bottom: 2px solid #1e232b;
  background: linear-gradient(#fff 0, #f7f3f7 10px);
  display: flex;
`;
const StatusLeft = styled.div`
  width: 1143px;
  padding: 1px 0 0 4px;
`;
const StatusLine = styled.div`
  height: 21px;
  display: flex;
  align-items: center;
`;
const StatusSep = styled(Sep)`
  margin-top: 6px;
`;
const StatusRight = styled.div`
  padding: 1px 0 0 4px;
`;
const FillBox = styled.div`
  flex: none;
  width: 18px;
  height: 18px;
  border: 1px solid #908e94;
  background: #221c18;
  margin: 0 3px 0 6px;
`;

/* ---------- taskbar ---------- */

const TaskBar = styled.div`
  flex: none;
  height: 39px;
  background: linear-gradient(90deg, #8496ad 0, #8294ad 56px, #a4c0dd 80px, #a6c2de 1075px, #8598b0 1110px, #8294ab);
  display: flex;
  align-items: center;
`;
const Task = styled.div<{ $on?: boolean; $w?: number; $stack?: boolean }>`
  flex: none;
  width: ${(p) => p.$w ?? 59}px;
  height: 39px;
  margin-right: 3px;
  border: 1px solid #38495f;
  border-radius: 3px;
  box-shadow: inset 0 0 0 1px rgba(255, 255, 255, 0.5)${(p) => (p.$stack ? ", 3px 0 0 -1px #b7cde4, 4px 0 0 -1px #38495f" : "")};
  background: ${(p) =>
    p.$on ? "radial-gradient(circle at 50% 100%, #9fe09c, #d5ead8 60%, #e2eef0)" : "linear-gradient(#c6d7e9, #a2bad5 50%, #abc5e0)"};
  display: flex;
  align-items: center;
  justify-content: center;
`;
const Clock = styled.div`
  width: 78px;
  display: flex;
  flex-direction: column;
  align-items: center;
  gap: 2px;
  color: #fff;
`;
const ShowDesktop = styled.div`
  width: 15px;
  height: 39px;
  border: 1px solid #4e5f75;
  background: linear-gradient(135deg, #9aacc0, #5f7288 60%, #7c8ea5);
`;

/* ---------- overlays ---------- */

const FloatBar = styled.div`
  position: absolute;
  left: 356px;
  top: 473px;
  width: 787px;
  height: 71px;
  border: 1px solid #22282e;
  box-shadow: inset 1px 1px 0 #dfeaf5, inset -1px -1px 0 #66c4e6;
  background: linear-gradient(#9ab6d4, #b8d0ec 26px, #bdd3ef);
  padding: 0 7px;
`;
const FloatHead = styled.div`
  height: 24px;
  padding-top: 7px;
  display: flex;
  align-items: center;
  justify-content: space-between;
`;
const FloatClose = styled(SmallWin)`
  width: 13px;
  height: 13px;
  margin-right: 2px;
`;
const FloatBody = styled.div`
  height: 37px;
  background: linear-gradient(#fff, #f7f3f7 12px);
  border-bottom: 1px solid #c9cfda;
  display: flex;
  align-items: center;
  padding: 2px 0 0 7px;
`;
const HotButton = styled.div`
  flex: none;
  width: 26px;
  height: 26px;
  border: 1px solid #b5cdf2;
  border-radius: 3px;
  background: linear-gradient(#fcfdff, #e8effb);
  display: flex;
  align-items: center;
  justify-content: center;
`;
const Tooltip = styled.div`
  position: absolute;
  left: 1099px;
  top: 543px;
  width: 238px;
  height: 51px;
  border: 1px solid #767679;
  border-radius: 2px;
  box-shadow: 3px 3px 2px rgba(60, 60, 60, 0.5);
  background: linear-gradient(#fff, #e4e5f1);
  padding: 1px 0 0 5px;
  display: flex;
  flex-direction: column;
  color: #575757;
  ${Run} { line-height: 15.500px; align-self: flex-start; }
`;
const Marks = styled.svg`
  position: absolute;
  left: 0;
  top: 0;
`;

const menu: [string, number, number][] = [
  ["Файл", 29, 0], ["Правка", 40, 0], ["Вид", 21, 0], ["Макет", 34, 0], ["Упорядочить", 72, 5], ["Эффекты", 51, 0],
  ["Растровые изображения", 136, 1], ["Текст", 30, 0], ["Таблица", 47, 0], ["Инструменты", 76, 0], ["Окно", 29, 0], ["Справка", 46, 0],
];

const SpinField = () => (
  <Field $w={69}><Label text="90,0" w={22} size={12} />
    <Spins><Spin><Tri dir="d" c="#4a6cb5" s={6} /></Spin><Spin><Tri dir="u" c="#4a6cb5" s={6} /></Spin></Spins>
  </Field>
);

const Size = () => (
  <>
    <Pair $w={13} $gap={5}>{I.width}{I.height}</Pair>
    <Gap $w={3} />
    <FieldStack>
      <Field $w={75}><Label text="5,821 мм" w={43} size={12} /></Field>
      <Field $w={75}><Label text="40,217 мм" w={49} size={12} /></Field>
    </FieldStack>
  </>
);
const Scale = () => (
  <>
    <FieldStack>
      <Field $w={43}><Label text="100,0" w={27} size={12} /></Field>
      <Field $w={43}><Label text="100,0" w={27} size={12} /></Field>
    </FieldStack>
    <Gap $w={4} />
    <Pair $gap={7}>{I.pct}{I.pct}</Pair>
  </>
);
const Pos = () => (
  <>
    {I.refpt}
    <Gap $w={10} />
    <Pair $gap={2} $drop={2}><Label text="x:" w={9} size={12} /><Label text="y:" w={9} size={12} /></Pair>
    <Gap $w={2} />
    <FieldStack>
      <Field $w={75}><Label text="128,288 мм" w={54} size={12} /></Field>
      <Field $w={75}><Label text="226,915 мм" w={54} size={12} /></Field>
    </FieldStack>
  </>
);

const Bucket = () => (
  <svg width="16" height="15"><path d="M7 1.500L.8 8 7 14l6-6z" fill="#fff" stroke={DARK} /><path d="M2 8.500h10l-5 5z" fill="#ee8a1d" /><path d="M6 5V0" stroke={DARK} strokeWidth="1.200" /><path d="M11 6q4 0 4 6" stroke="#d9781a" strokeWidth="1.600" fill="none" /></svg>
);

export default function App() {
  return (
    <>
      <Global />
      <Screen>
        <TitleBar>
          <Cell $w={16} $h={18}>{I.app}</Cell>
          <TitleText><Label text="CorelDRAW X6 (64 бит) - [Безымянный-1]" w={225} face={SEGOE} size={12} /></TitleText>
          <WinButton><svg width="11" height="5"><rect x=".5" y=".5" width="10" height="4" rx="1" fill="#fff" stroke="#4b5566" /></svg></WinButton>
          <WinButton><svg width="12" height="11"><path d="M3.500 .500h8v7h-8z" fill="#fff" stroke="#4b5566" /><path d="M.5 3.500h8v7h-8z" fill="#fff" stroke="#4b5566" /><path d="M3.500 6.500h2v1h-2z" fill="#9bb" stroke="#4b5566" /></svg></WinButton>
          <WinButton $close><svg width="12" height="10"><path d="M2 1l8 8M10 1L2 9" stroke="#4c3038" strokeWidth="4.200" /><path d="M2.500 1.500l7 7M9.500 1.500l-7 7" stroke="#fff" strokeWidth="2.400" /></svg></WinButton>
        </TitleBar>

        <MenuBar>
          <Gap $w={2} />{I.doc}
          <MenuItems>
            {menu.map(([t, w, m]) => <Label key={t} text={t} w={w} mark={m} face={SEGOE} size={12} />)}
          </MenuItems>
          <MdiButtons>
            <svg width="8" height="8"><path d="M0 5h8v2H0z" fill="#c9c9c9" /></svg>
            <svg width="8" height="8"><path d="M2 .500h5.500V6" fill="none" stroke="#c9c9c9" /><path d="M1 3h4v4H1z" fill="none" stroke="#c9c9c9" strokeWidth="1.600" /></svg>
            <svg width="8" height="8"><path d="M1 1l6 6M7 1L1 7" stroke="#c9c9c9" strokeWidth="2" /></svg>
          </MdiButtons>
        </MenuBar>

        <StandardBar>
          <Grip $h={18} /><Gap $w={2} />
          <Cell>{I.neu}</Cell><Cell>{I.open}</Cell><Cell>{I.save}</Cell><Cell>{I.print}</Cell>
          <Sep /><Cell>{I.cut}</Cell><Cell>{I.copy}</Cell><Cell>{I.paste}</Cell><Sep />
          <Cell>{I.undo}</Cell><Cell $w={16}><Caret /></Cell><Cell>{I.redo}</Cell><Cell $w={16}><Caret /></Cell>
          <Sep $w={6} /><Cell $ml={1}>{I.connect}</Cell><Sep $w={9} /><Cell>{I.imp}</Cell><Cell>{I.exp}</Cell><Sep $w={8} />
          <Cell>{I.launch}</Cell><Cell $w={18}><Caret /></Cell><Cell $ml={-3}>{I.welcome}</Cell><Sep /><Gap $w={5} />
          <Combo $w={86}><Label text="100%" w={28} size={12} /><Caret /></Combo>
          <Gap $w={4} /><Sep /><Gap $w={7} />
          <Label text="Привязать к" w={63} face={SEGOE} size={12} />
          <Gap $w={13} /><Caret /><Gap $w={11} />{I.checks}
        </StandardBar>

        <PropertyBar>
          <Grip $h={26} /><Gap $w={7} />
          <Pos /><Gap $w={5} /><Size />
          <Gap $w={4} /><Sep $h={26} /><Gap $w={4} /><Scale />
          <Gap $w={8} />{I.lock}<Gap $w={1} /><Sep $h={26} /><Gap $w={7} />{I.rot}<Gap $w={4} />
          <Field $w={46} $h={22}><Label text="0,0" w={17} size={12} /></Field><Gap $w={5} />{I.deg}
          <Gap $w={11} /><Sep $h={26} /><Gap $w={4} />{I.mirH}<Gap $w={11} />{I.mirV}<Gap $w={6} /><Sep $h={26} /><Gap $w={1} />
          <Pressed>{I.ell}</Pressed><Cell>{I.pie}</Cell><Cell>{I.arc}</Cell><Sep $h={26} /><Gap $w={6} />
          <Pair $gap={7}>{I.ang}{I.ang}</Pair><Gap $w={2} />
          <FieldStack><SpinField /><SpinField /></FieldStack>
          <Gap $w={5} /><Pair $gap={12}>{I.deg}{I.deg}</Pair>
          <Gap $w={10} /><Sep $h={26} /><Gap $w={7} />{I.dirn}<Gap $w={7} /><Sep $h={26} /><Gap $w={6} />{I.wrap}
          <Gap $w={3} /><Sep $h={26} /><Gap $w={6} />{I.pen}<Gap $w={4} />
          <Combo $w={88}><Label text="0,2 мм" w={31} size={12} /><Caret /></Combo>
          <Gap $w={4} /><Sep $h={26} /><Gap $w={6} />{I.front}<Gap $w={12} />{I.back}<Gap $w={6} /><Sep $h={26} /><Gap $w={5} />{I.curve}
        </PropertyBar>

        <Main>
          <Toolbox>
            <ToolGrip />
            {toolIcons.map((t, i) => (
              <Tool key={i} $on={i === 0}>
                <svg width="15" height="15">{t.d}</svg>
                {t.fly ? <Fly width="5" height="5"><path d="M5 0v5H0z" /></Fly> : null}
              </Tool>
            ))}
          </Toolbox>

          <Middle>
            <MiddleTop>
              <DocArea>
                <TopRuler />
                <DocRow>
                  <LeftRuler />
                  <Sheet><Drawing /></Sheet>
                  <VScroll>
                    <Tri dir="u" c="#333" s={7} />
                    <ThumbV><svg width="8" height="8"><path d="M0 1.500h8M0 4.500h8M0 7.500h8" stroke="#444" /></svg></ThumbV>
                    <Tri dir="d" c="#333" s={7} />
                  </VScroll>
                </DocRow>
                <PageBar>
                  <PageNav>
                    <Gap $w={4} /><PageAdd /><Gap $w={9} />
                    <svg width="7" height="9"><path d="M.5 0v9M7 0v9L2 4.500z" fill="#6d6b70" stroke="#6d6b70" strokeWidth=".6" /></svg>
                    <Gap $w={11} /><Tri dir="l" c="#6d6b70" s={9} /><Gap $w={20} />
                    <Label text="1 из 1" w={34} size={12} /><Gap $w={23} />
                    <Tri dir="r" c="#6d6b70" s={9} /><Gap $w={7} />
                    <svg width="8" height="9"><path d="M7.500 0v9M1 0v9l5-4.500z" fill="#6d6b70" stroke="#6d6b70" strokeWidth=".6" /></svg>
                    <Gap $w={8} /><PageAdd />
                    <PageTab><Label text="Страница 1" w={66} face={SEGOE} size={12} /></PageTab>
                    <Gap $w={236} /><Grip $h={12} />
                  </PageNav>
                  <HScroll>
                    <Tri dir="l" c="#333" s={7} />
                    <ThumbH><svg width="8" height="8"><path d="M.5 0v8M3.500 0v8M6.500 0v8" stroke="#444" /></svg></ThumbH>
                    <Tri dir="r" c="#333" s={7} />
                  </HScroll>
                  <Cell $w={21} $h={18}>
                    <svg width="14" height="14"><circle cx="6" cy="6" r="4.500" fill="#fff" stroke={DARK} /><circle cx="6" cy="6" r="1.800" fill="none" stroke={DARK} /><path d="M9.500 9.500l3.500 4" stroke={DARK} strokeWidth="2" /></svg>
                  </Cell>
                </PageBar>
              </DocArea>

              <Docker>
                <DockerHead>
                  <Label text="Диспетчер объектов" w={113} face={SEGOE} size={12} />
                  <Gap $w={87} />
                  <svg width="9" height="8"><path d="M0 .500L3.500 4 0 7.500M5 .500L8.500 4 5 7.500" stroke="#3c4a58" strokeWidth="1.300" fill="none" /></svg>
                  <Gap $w={4} />
                  <SmallWin><svg width="11" height="5"><rect x=".5" y=".5" width="10" height="4" fill="#fff" stroke="#4b5566" /></svg></SmallWin>
                  <SmallWin $close><svg width="11" height="9"><path d="M2 1l7 7M9 1L2 8" stroke="#4c3038" strokeWidth="4" /><path d="M2 1l7 7M9 1L2 8" stroke="#fff" strokeWidth="2.200" /></svg></SmallWin>
                </DockerHead>
                <DockerTools>
                  <ToolButton><LayerSwitches /></ToolButton>
                  <ToolButton $on><LayerEdit /></ToolButton>
                  <ToolButton><LayerView /></ToolButton>
                  <PageInfo>
                    <Label text="Страница 1" w={58} face={SEGOE} size={11.5} />
                    <Label text="Слой 1" w={34} face={SEGOE} size={11.5} />
                  </PageInfo>
                  <Flyout><Tri dir="r" s={8} /></Flyout>
                </DockerTools>
                <Tree>
                  <Row $head><Gap $w={7} /><Expander /><Gap $w={8} /><PageIcon /><Gap $w={5} /><Label text="Страница 1" w={63} bold face={SEGOE} size={12} /></Row>
                  <Layer name="Направляющие" w={86} swatch="#0f0fff" />
                  <Layer name="Слой 1" w={38} swatch="#211b17" color="#f00" bold italic={false} expander />
                  <Row $plain><Gap $w={61} /><Oval /><Gap $w={4} /><Selected><Label text="Эллипс" w={41} face={SEGOE} size={12} /></Selected></Row>
                  <Row><Gap $w={61} /><Oval /><Gap $w={4} /><Label text="Эллипс" w={41} face={SEGOE} size={12} /></Row>
                  <Row $head><Gap $w={7} /><Expander /><Gap $w={8} /><PageIcon /><Gap $w={5} /><Label text="Главная страница" w={102} bold face={SEGOE} size={12} /></Row>
                  <Layer name="Направляющие (все стран" w={146} color="#1c63b7" swatch="#0f0fff" />
                  <Layer name="Рабочий стол" w={77} color="#1c63b7" swatch="#211b17" />
                  <Layer name="Сетка" w={36} color="#1c63b7" swatch="#c4c2c4" off />
                </Tree>
                <DockerFoot>
                  <ToolButton><LayerNew /></ToolButton>
                  <ToolButton><LayerNew t="123" /></ToolButton>
                  <ToolButton><LayerNew t="135" /></ToolButton>
                  <ToolButton $off><LayerNew t="246" off /></ToolButton>
                  <Gap $w={135} />
                  <ToolButton><svg width="12" height="14"><path d="M1.500 4v9.500h9V4M0 3.500h12M4 3V1h4v2M4.500 6v5M7.500 6v5" stroke={INK} fill="none" /></svg></ToolButton>
                </DockerFoot>
              </Docker>
            </MiddleTop>
            <DocPalette>
              <Grip $h={12} /><Gap $w={4} /><Play /><Gap $w={4} /><Dropper c="#26303f" /><Gap $w={4} /><NoColor s={15} />
              <Gap $w={387} />
              <Label text="Перетащите сюда цвета (или объекты), чтобы сохранить их вместе с документом" w={451} face={`"Liberation Sans", sans-serif`} size={11} color="#6f6f6f" italic />
            </DocPalette>
          </Middle>

          <Palette>
            <PaletteGrip />
            <Play /><Gap $w={1} />
            <Cell $w={18} $h={20}><Dropper c="#b9b7bc" /></Cell>
            <Cell $w={18} $h={18}><Tri dir="u" c="#777" s={7} /></Cell>
            <NoColor s={17} />
            {chips.map((c, i) => <Chip key={i} $c={c} />)}
            <Cell $w={18} $h={18}><Tri dir="d" c="#333" s={8} /></Cell>
            <Cell $w={18} $h={16}><svg width="8" height="9"><path d="M1 0v9" stroke="#000" strokeWidth="1.500" /><path d="M7.500 0v9l-5-4.500z" /></svg></Cell>
          </Palette>
        </Main>

        <StatusBar>
          <StatusLeft>
            <StatusLine>
              <Label text="( 279,299; 208,725 )" w={100} /><Gap $w={12} /><Tri dir="r" s={9} />
              <Gap $w={418} /><Label text="Эллипс вкл. Слой 1" w={98} /><Gap $w={431} />
              <svg width="14" height="13"><rect x=".5" y=".5" width="13" height="10" rx="1" fill="#c8c3dc" stroke="#77769a" /><rect x="2.500" y="2.500" width="9" height="6" fill="#fff" stroke="#c9778a" /><rect x="5" y="4" width="4" height="3" fill="#8a9cc8" /><path d="M4 12.500h6" stroke="#77769a" /></svg>
            </StatusLine>
            <StatusLine>
              <Label text="Щелкните объект дважды для поворота/наклона; инструмент с двойным щелчком выбирает все объекты; Shift+щелчок - выбор нескольких элементов; Alt+щелчок - цифры; Ctrl+щелчок - выбор в группе" w={1055} />
              <Gap $w={4} /><Tri dir="r" s={9} />
            </StatusLine>
          </StatusLeft>
          <StatusSep $w={1} $h={12} />
          <StatusRight>
            <StatusLine><Bucket /><FillBox><NoColor s={16} /></FillBox><Label text="Нет" w={18} /></StatusLine>
            <StatusLine><Cell $w={16} $h={18}>{I.pen}</Cell><FillBox /><Label text="C:0 M:0 Y:0 K:100  0,200 мм" w={136} /></StatusLine>
          </StatusRight>
        </StatusBar>

        <TaskBar>
          <Cell $w={54} $h={39}>
            <svg width="38" height="38"><defs><radialGradient id="orb" cx=".5" cy=".9" r=".9"><stop offset="0" stopColor="#5cc4ee" /><stop offset=".5" stopColor="#1e5f9c" /><stop offset="1" stopColor="#8fb2cf" /></radialGradient></defs>
              <circle cx="19" cy="19" r="17.500" fill="url(#orb)" stroke="#264d74" />
              <path d="M11 11q4.500-3 8.500-1l-2.500 8.500q-4-2-8.500 0z" fill="#f0662b" /><path d="M20.500 10.500q4 2 8.500 0l-2.500 8.500q-4.500 2-8.500 0z" fill="#8cc63e" /><path d="M8 20q4.500-2 8.500 0L14 28.500q-4-2-8.500 0z" fill="#4fb0ee" /><path d="M17.500 20.500q4 2 8.500 0L23.500 29q-4.500 2-8.500 0z" fill="#fcc72e" /></svg>
          </Cell>
          <Cell $w={70} $h={39}>
            <svg width="30" height="30"><path d="M2 13h26v16H3z" fill="#f4f4f0" stroke="#222" /><path d="M0 6l26-5 1 4L1 10z" fill="#fff" stroke="#222" /><path d="M3 5l4 4M10 4l4 3M17 3l4 3" stroke="#111" strokeWidth="3" /><path d="M2 10h26v4H2z" fill="#111" /><path d="M5 12h3M12 12h3M19 12h3" stroke="#fff" strokeWidth="2.500" /><g fontFamily="Liberation Sans, sans-serif" fontWeight="700" fontSize="14"><text x="3" y="27" fill="#d04a24">3</text><text x="11" y="27" fill="#2452a8">2</text><text x="19" y="27" fill="#258a35">1</text></g></svg>
          </Cell>
          <Cell $w={56} $h={39}>
            <svg width="30" height="32"><path d="M24 21A9.500 9.500 0 1124.500 15H10" fill="none" stroke="#2f9fe0" strokeWidth="5.500" /><path d="M24 21A9.500 9.500 0 1124.500 15H10" fill="none" stroke="#7fcdf5" strokeWidth="2" /><path d="M3 29C-2 25 6 12 16 5s14-4 12 1" fill="none" stroke="#f5c63c" strokeWidth="2.500" /></svg>
          </Cell>
          <Cell $w={66} $h={39}>
            <svg width="20" height="31"><path d="M8 7h10v18L8 27z" fill="#0a5c1a" stroke="#11d43b" /><path d="M2 7L14 0v22L2 29z" fill="#17391f" stroke="#0d2a12" /><path d="M2 28l12-6v3h4v4H2z" fill="#0c2f14" stroke="#12cf3a" /></svg>
          </Cell>
          <Cell $w={58} $h={39}>
            <svg width="27" height="26"><path d="M7 2h19v22H7z" fill="#a3d3ee" stroke="#5c9cc4" /><path d="M1 1h20v23H1z" fill="#c8e6f6" stroke="#6aa7cb" /><circle cx="10.500" cy="12.500" r="8" fill="#f0731d" stroke="#fff" /><path d="M8 8v9l7-4.500z" fill="#fff" /></svg>
          </Cell>
          <Cell $w={64} $h={39}>
            <svg width="34" height="28"><path d="M7 5q-5 3 0 8M3 3q9-4 9 5M1 4q0-4 6-4" fill="none" stroke="#eee" strokeWidth="2" /><path d="M9 6h20v15H9z" fill="#8c8e90" stroke="#1c1c1c" strokeWidth="2" /><path d="M8 6v15M29.500 6v15" stroke="#e8a91c" strokeWidth="2" strokeDasharray="3 3" /><path d="M5 22h26l2 5H2z" fill="#1d1d1d" /></svg>
          </Cell>
          <Gap $w={2} />
          <Task>
            <svg width="30" height="30"><circle cx="15" cy="15" r="14" fill="#ffd23c" /><path d="M15 15L2.900 8A14 14 0 0127.100 8z" fill="#dd4436" /><path d="M15 1a14 14 0 0112.100 7H15z" fill="#dd4436" /><path d="M2.900 8A14 14 0 0015 29l6-10.500L9 18.500z" fill="#1da261" /><circle cx="15" cy="15" r="6.500" fill="#fff" /><circle cx="15" cy="15" r="5" fill="#3f7de0" /></svg>
          </Task>
          <Cell $w={58} $h={39}>
            <svg width="31" height="32"><path fillRule="evenodd" d="M15.500 .500a15 15.500 0 100 31 15 15.500 0 100-31zM15.500 4.500a5 11.500 0 110 23 5 11.500 0 110-23z" fill="#d8151b" /><path d="M5 7q4-5 10-6 5 0 10 6-4-4-6-2-3-2-7 0-3-2-7 2z" fill="#f47c78" opacity=".6" /></svg>
          </Cell>
          <Gap $w={4} />
          <Task>
            <svg width="32" height="30"><path d="M1 5h10l2 3h18v17H1z" fill="#eac95f" stroke="#a98a35" /><path d="M3 1h8v4H3zM12 3h8v4h-8zM21 5h8v4h-8z" fill="#fff" stroke="#caa" /><path d="M4 2h3" stroke="#2fa02f" strokeWidth="2" /><path d="M13 4h3" stroke="#d8402f" strokeWidth="2" /><path d="M22 6h4" stroke="#2b7fd0" strokeWidth="2" /><path d="M2 9h28v17H2z" fill="#f9e7a4" /><path d="M5 29v-9q11-4 22 0v9h-4v-6H9v6z" fill="#a8dbf5" stroke="#5aa9d6" /></svg>
          </Task>
          <Task $w={54} $stack>
            <svg width="27" height="19"><path d="M.5 .500h26v18H.5z" fill="#fbf2e0" stroke="#d8c49b" /><path d="M1 1l12.500 11L26 1M1 18l9-9M26 18l-9-9" fill="none" stroke="#cfae7c" /></svg>
          </Task>
          <Gap $w={5} />
          <Task>
            <svg width="30" height="30"><circle cx="15" cy="15" r="12.500" fill="#0fa9ee" /><circle cx="9" cy="9" r="8" fill="#0fa9ee" /><circle cx="21" cy="21" r="8" fill="#0fa9ee" /><path d="M20 10q-2-3-6-2.500T10 12t5 3 5 4-4.500 4Q11 23 9.500 19.500" fill="none" stroke="#fff" strokeWidth="3.600" strokeLinecap="round" /></svg>
          </Task>
          <Task $on>
            <svg width="32" height="32"><path d="M2 8Q8 0 16 1t14 6q2 10-3 16L16 31 5 24Q0 16 2 8z" fill="#5fae33" /><path d="M9 2q-4 12 7 29M16 1q-3 14 0 30M23 3q4 12-7 28" stroke="#2f7a22" strokeWidth="2" fill="none" /><path d="M4 3l4-2 15 14 2 8-7-4L4 7z" fill="#fff" stroke="#777" /><path d="M7 4l12 14" stroke="#999" /></svg>
          </Task>
          <Task>
            <svg width="32" height="32"><path d="M5 24A13 13 0 0114 3M27 9A13 13 0 0118 29" fill="none" stroke="#35b4ec" strokeWidth="3" /><path d="M9 25A11 11 0 0123 7M29 14A13 13 0 0110 28" fill="none" stroke="#7dcff5" strokeWidth="2" /><path d="M12 9h8v6h3l-7 8-7-8h3z" fill="#4f9a2b" stroke="#2f6a18" /></svg>
          </Task>
          <Gap $w={325} />
          <Label text="RU" w={15} size={12} face={SEGOE} color="#fff" />
          <Gap $w={14} />
          <Tri dir="u" c="#fff" s={9} /><Gap $w={12} />
          <svg width="15" height="15"><path d="M1 1h6v11H1z" fill="#444" stroke="#fff" /><path d="M7 5h7v4q-3 4-4 3zM9 1v4M12 1v4" fill="#fff" stroke="#fff" strokeWidth="1.500" /><path d="M1 8l6 6M7 8l-6 6" stroke="#e0221d" strokeWidth="2.500" /></svg>
          <Gap $w={10} />
          <svg width="16" height="12"><path d="M1 12v-2M4 12V8.500M7.500 12V6M11 12V3M14.500 12V0" stroke="#fff" strokeWidth="2" /></svg>
          <Gap $w={8} />
          <svg width="15" height="13"><path d="M0 4h3l4-4v13L3 9H0z" fill="#fff" /><path d="M9 4q2 2.500 0 5M11 2q4 4.500 0 9" stroke="#fff" fill="none" /></svg>
          <Gap $w={9} />
          <svg width="16" height="14"><path d="M1 0v14" stroke="#fff" strokeWidth="1.600" /><path d="M2 1h6v2h6l-2 3h-4L8 8H2z" fill="#fff" /></svg>
          <Gap $w={5} />
          <Clock>
            <Label text="16:26" w={28} face={SEGOE} size={12} />
            <Label text="06.06.2013" w={54} face={SEGOE} size={12} />
          </Clock>
          <ShowDesktop />
        </TaskBar>

        <FloatBar>
          <FloatHead>
            <Label text="Преобразовать" w={84} face={SEGOE} size={12} />
            <FloatClose $close><svg width="7" height="7"><path d="M1 1l5 5M6 1L1 6" stroke="#4c3038" strokeWidth="3" /><path d="M1 1l5 5M6 1L1 6" stroke="#fff" strokeWidth="1.600" /></svg></FloatClose>
          </FloatHead>
          <FloatBody>
            <Pos /><Gap $w={5} /><Sep $h={26} /><Gap $w={5} /><Size />
            <Gap $w={4} /><Sep $h={26} /><Gap $w={3} /><Scale />
            <Gap $w={8} /><Sep $h={26} /><Gap $w={1} />{I.lock}<Gap $w={1} /><Sep $h={26} /><Gap $w={4} />{I.mirH}<Gap $w={12} />{I.mirV}
            <Gap $w={5} /><Sep $h={26} /><Gap $w={7} />{I.rot}<Gap $w={3} />
            <Field $w={46} $h={22}><Label text="0,0" w={17} size={12} /></Field><Gap $w={5} />{I.deg}
            <Gap $w={12} /><Sep $h={26} /><Gap $w={7} />
            <Pair $gap={6}>
              <svg width="10" height="10"><path d="M2 4A3.500 3.500 0 118 6.500" fill="none" stroke={INK} strokeDasharray="2 1" /><path d="M0 6l3 3M3 6L0 9M8 5v4H4" stroke={INK} fill="none" /></svg>
              <svg width="10" height="10"><path d="M2 4A3.500 3.500 0 118 6.500" fill="none" stroke={INK} strokeDasharray="2 1" /><path d="M0 6l1.500 2L3 6M1.500 8v2M8 5v4H4" stroke={INK} fill="none" /></svg>
            </Pair>
            <Gap $w={3} />
            <FieldStack>
              <Field $w={75}><Label text="128,288 мм" w={54} size={12} /></Field>
              <Field $w={75}><Label text="247,023 мм" w={54} size={12} /></Field>
            </FieldStack>
            <Gap $w={4} /><Sep $h={26} /><Gap $w={8} />
            <Pair $gap={6} $drop={1}>
              <svg width="9" height="6"><path d="M0 3.500h9" stroke={DARK} /><path d="M0 3.500l4-2.500v2.500z" fill={DARK} /></svg>
              <svg width="9" height="11"><path d="M5 0v11" stroke={DARK} strokeWidth="1.400" /><path d="M5 0L2 4h3z" fill={DARK} /></svg>
            </Pair>
            <Gap $w={4} />
            <FieldStack>
              <Field $w={46} $active><Label text="45" w={12} size={12} /></Field>
              <Field $w={46}><Label text="0,0" w={17} size={12} /></Field>
            </FieldStack>
            <Gap $w={5} /><Pair $gap={12}>{I.deg}{I.deg}</Pair>
            <Gap $w={12} /><Sep $h={26} />
            <HotButton><svg width="16" height="16"><path d="M.5 4.500l4-4 4 4-4 4z" fill="#fff" stroke="#8a8aa6" /><path d="M8 3l4 4" stroke={DARK} strokeWidth="1.600" /><path d="M13 3v5H8z" fill={DARK} /><path d="M7.500 12l4-4 4 4-4 4z" fill="#fff" stroke={DARK} strokeDasharray="1.500 1" /></svg></HotButton>
            <Sep $h={26} /><Gap $w={6} />
            <svg width="15" height="15"><path d="M5.500 .500h8v8h-8z" fill="#fff" stroke={INK} /><path d="M9.500 2v5M7 4.500h5" stroke={DARK} /><path d="M0 4.500h5M9.500 10v5" stroke={INK} strokeDasharray="2 1" /></svg>
          </FloatBody>
        </FloatBar>

        <Tooltip>
          <Label text="Применение для дубликата" w={162} bold face={SEGOE} size={12} />
          <Label text="Применить преобразование к дубликату" w={225} face={SEGOE} size={12} />
          <Label text="объекта." w={47} face={SEGOE} size={12} />
        </Tooltip>

        <Marks width="1366" height="768">
          <g fill="none" stroke="#ed1c24" strokeWidth="5">
            <circle cx="1013.800" cy="522" r="36.800" />
            <circle cx="1084" cy="519" r="26.500" />
          </g>
        </Marks>
      </Screen>
    </>
  );
}
